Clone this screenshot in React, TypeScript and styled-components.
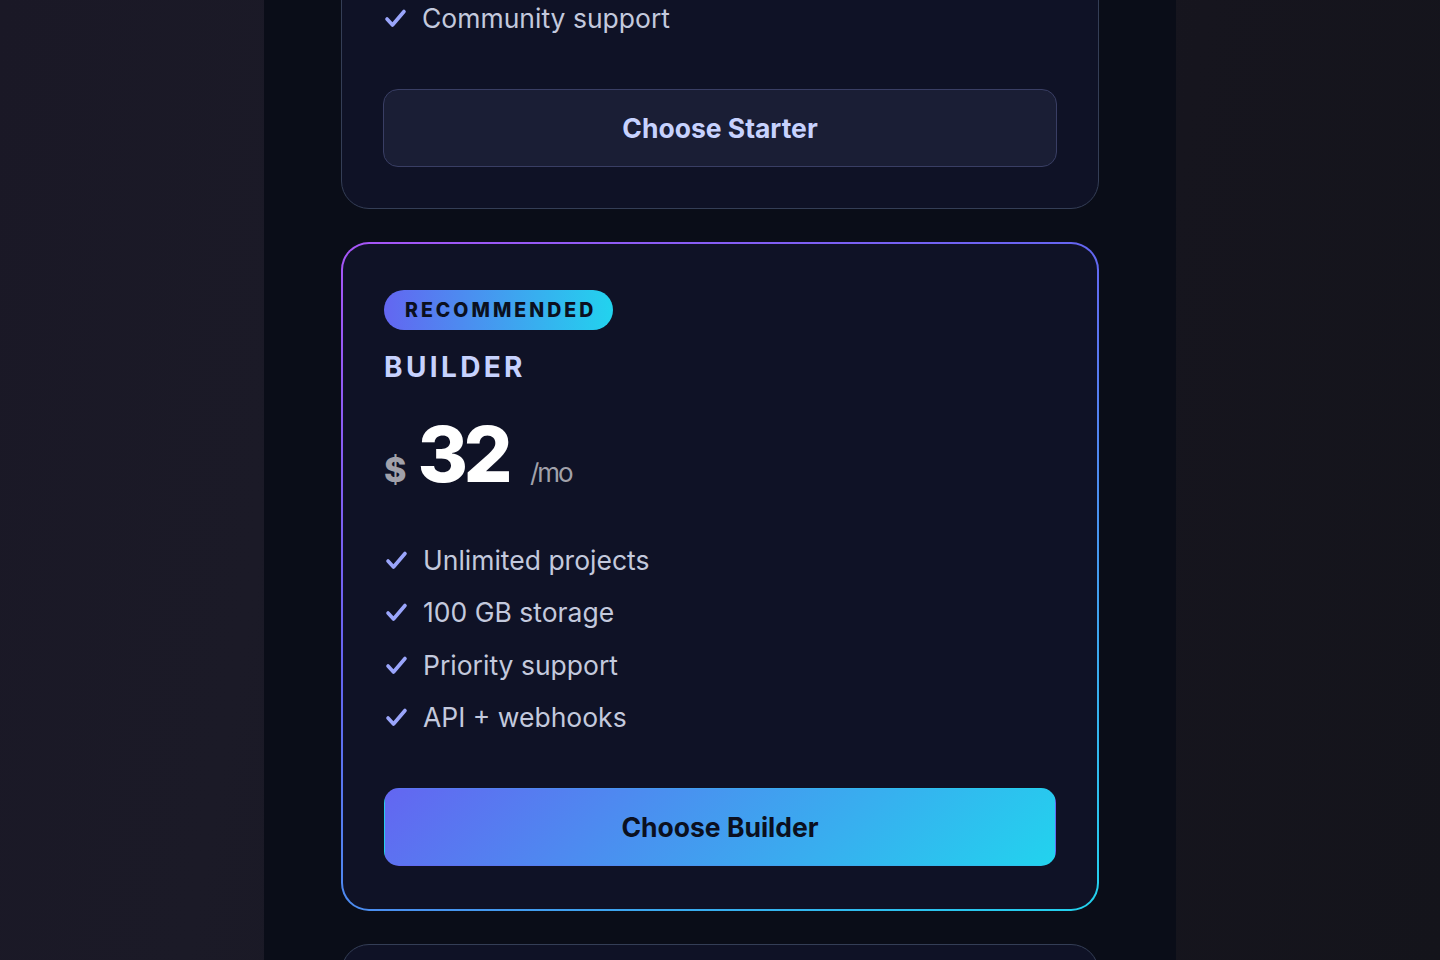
import * as React from 'react';
import styled, { createGlobalStyle } from 'styled-components';

const GlobalStyle = createGlobalStyle`
  html, body {
    margin: 0;
    padding: 0;
    height: 100%;
    background: #15151d;
  }

  * {
    box-sizing: border-box;
  }
`;

const Viewport = styled.div`
  height: 100vh;
  overflow-y: auto;
  scrollbar-width: none;
  background: linear-gradient(100deg, #1a1826 0%, #1b1a27 22%, #16151e 75%, #14141b 100%);
  font-family: Inter, 'Noto Sans', sans-serif;

  &::-webkit-scrollbar {
    display: none;
  }
`;

const Column = styled.main`
  width: 912px;
  min-height: 100%;
  margin: 0 auto;
  padding: 80px 77px 120px;
  background: #0a0d18;
`;

const Header = styled.header`
  display: flex;
  flex-direction: column;
  align-items: center;
  gap: 14px;
  margin-bottom: 48px;
  text-align: center;
`;

const Heading = styled.h1`
  margin: 0;
  color: #f1f5f9;
  font-size: 44px;
  font-weight: 800;
  letter-spacing: -0.02em;
`;

const Lead = styled.p`
  margin: 0;
  color: #94a3b8;
  font-size: 22px;
`;

const CardList = styled.div`
  display: flex;
  flex-direction: column;
  gap: 33px;
`;

const Card = styled.section<{ $featured?: boolean }>`
  display: flex;
  flex-direction: column;
  border-radius: 28px;
  ${p => p.$featured
    ? `
      padding: 46px 41px 43px;
      border: 2px solid transparent;
      background:
        linear-gradient(#0f1226, #0f1226) padding-box,
        linear-gradient(150deg, #a855f7 0%, #6366f1 40%, #22d3ee 100%) border-box;
    `
    : `
      padding: 46px 41px 40.5px;
      border: 1.5px solid #343e56;
      background: #0f1226;
    `}
`;

const Badge = styled.span`
  align-self: flex-start;
  display: inline-flex;
  align-items: center;
  height: 40px;
  padding: 0 17px 0 21px;
  margin-bottom: 20px;
  border-radius: 20px;
  background: linear-gradient(90deg, #6366f1, #22d3ee);
  color: #0b1020;
  font-size: 19.5px;
  font-weight: 800;
  letter-spacing: 0.155em;
`;

const PlanName = styled.h2`
  margin: 0;
  color: #c7d2fe;
  font-size: 28px;
  line-height: 34px;
  font-weight: 700;
  letter-spacing: 0.12em;
`;

const PriceRow = styled.div`
  display: flex;
  align-items: baseline;
  margin-top: 32px;
  line-height: 1;
`;

const Currency = styled.span`
  color: #a1a1aa;
  font-size: 34px;
  font-weight: 800;
  margin-right: 11px;
`;

const Amount = styled.span`
  color: #ffffff;
  font-size: 77px;
  font-weight: 800;
  letter-spacing: -0.06em;
  margin-right: 22px;
`;

const Period = styled.span`
  color: #a1a1aa;
  font-size: 26px;
  letter-spacing: -0.08em;
`;

const Features = styled.ul`
  display: flex;
  flex-direction: column;
  gap: 12.5px;
  margin: 47px 0 0;
  padding: 0;
  list-style: none;
`;

const Feature = styled.li`
  display: flex;
  align-items: center;
  gap: 15px;
  height: 40px;
  color: #c3c9dd;
  font-size: 26.5px;
`;

const CheckIcon = styled.svg`
  flex: none;
  width: 24px;
  height: 24px;
  color: #9aa5fb;
`;

const ChooseButton = styled.button<{ $featured?: boolean }>`
  height: 78px;
  margin-top: 51px;
  border-radius: 15px;
  font-family: inherit;
  font-size: 26.5px;
  font-weight: 700;
  cursor: pointer;
  ${p => p.$featured
    ? `
      border: 1.5px solid transparent;
      background: linear-gradient(135deg, #6366f1, #22d3ee);
      color: #0b1020;
    `
    : `
      border: 1.5px solid #393e64;
      background: #1a1e35;
      color: #c7d2fe;
    `}
`;

const Check = () => (
  <CheckIcon viewBox="0 0 24 24" fill="none" stroke="currentColor" strokeWidth={3.6} strokeLinecap="round" strokeLinejoin="round">
    <path d="M4 13 9.5 19 21 5.5" />
  </CheckIcon>
);

interface IPlan {
  name: string;
  price: number;
  features: string[];
  featured?: boolean;
}

const plans: IPlan[] = [
  { name: 'Starter', price: 12, features: ['3 projects', '10 GB storage', 'Community support'] },
  {
    name: 'Builder',
    price: 32,
    features: ['Unlimited projects', '100 GB storage', 'Priority support', 'API + webhooks'],
    featured: true,
  },
  { name: 'Scale', price: 79, features: ['Everything in Builder', '1 TB storage', 'SSO + audit logs', 'Dedicated manager'] },
];

const App = () => {
  const viewport = React.useRef<HTMLDivElement>(null);
  const featured = React.useRef<HTMLElement>(null);

  // keep the recommended card in view, where the design puts it
  React.useLayoutEffect(() => {
    if (viewport.current && featured.current) {
      const top = featured.current.getBoundingClientRect().top - viewport.current.getBoundingClientRect().top;
      viewport.current.scrollTop = top - 242;
    }
  }, []);

  return (
    <>
      <GlobalStyle />
      <Viewport ref={viewport}>
        <Column>
          <Header>
            <Heading>Pick a plan</Heading>
            <Lead>Simple pricing that grows with you.</Lead>
          </Header>
          <CardList>
            {plans.map(plan => (
              <Card key={plan.name} $featured={plan.featured} ref={plan.featured ? featured : undefined}>
                {plan.featured && <Badge>RECOMMENDED</Badge>}
                <PlanName>{plan.name.toUpperCase()}</PlanName>
                <PriceRow>
                  <Currency>$</Currency>
                  <Amount>{plan.price}</Amount>
                  <Period>/mo</Period>
                </PriceRow>
                <Features>
                  {plan.features.map(f => (
                    <Feature key={f}>
                      <Check />
                      {f}
                    </Feature>
                  ))}
                </Features>
                <ChooseButton $featured={plan.featured}>Choose {plan.name}</ChooseButton>
              </Card>
            ))}
          </CardList>
        </Column>
      </Viewport>
    </>
  );
};

export default App;
